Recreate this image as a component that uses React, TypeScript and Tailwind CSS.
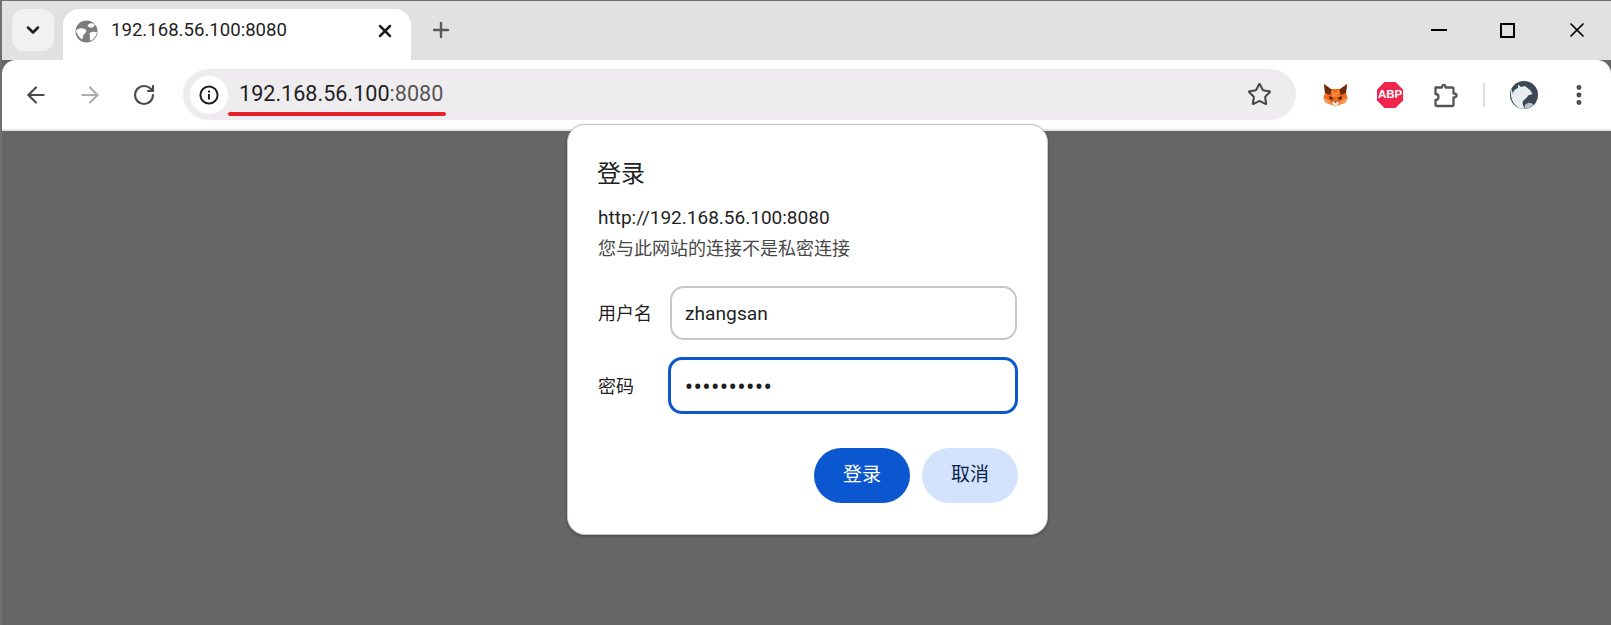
import React from 'react';
import { ArrowLeft, ArrowRight, ChevronDown, EllipsisVertical, Plus, RotateCw, Star, X } from 'lucide-react';

const latin = "font-['Roboto','Noto_Sans_CJK_SC',sans-serif]";

const Globe = () => (
  <svg width="23" height="23" viewBox="0 0 24 24">
    <circle cx="12" cy="12" r="11.5" fill="#7c7c7c" />
    <path d="M1 11 C4 8 8 8 11 10 C13 12 11 14 9 15 C8 17 9 19 7 20 C4 18 2 15 1 11 Z" fill="#fff" />
    <path d="M13 6 C15 3 18 3 20 4.5 C21.5 6 19 8 17 8 C15 8 14 7 13 6 Z" fill="#fff" />
    <path d="M15 14 C18 12 21 12 23 13 C22 17 20 20 16 22 C15 19 16 16 15 14 Z" fill="#fff" />
  </svg>
);

const InfoIcon = () => (
  <svg width="20" height="20" viewBox="0 0 20 20" fill="none">
    <circle cx="10" cy="10" r="8.6" stroke="#1f1f1f" strokeWidth="2" />
    <rect x="9" y="9" width="2" height="5.5" fill="#1f1f1f" />
    <rect x="9" y="5.6" width="2" height="2" fill="#1f1f1f" />
  </svg>
);

const Fox = () => (
  <svg width="25" height="24" viewBox="0 0 25 24">
    <path d="M1 1 L8 6 L17 6 L24 1 L23 10 L24.5 15 L22 20 L16 22 L12.5 23.5 L9 22 L3 20 L0.5 15 L2 10 Z" fill="#f26a1f" />
    <path d="M1 1 L9 7 L7 12 L2 10 Z M24 1 L16 7 L18 12 L23 10 Z" fill="#6b2c0e" />
    <path d="M8 7 L12.5 10 L17 7 L15 14 L10 14 Z" fill="#f58a3a" />
    <path d="M6.5 13 L10.5 15 L9 17 L6 16 Z M18.5 13 L14.5 15 L16 17 L19 16 Z" fill="#5b2a10" />
    <path d="M9 19.5 L12.5 18 L16 19.5 L15 22 L12.5 23.5 L10 22 Z" fill="#f5e6d8" />
    <path d="M11 18.6 L14 18.6 L12.5 20 Z" fill="#33231a" />
    <path d="M0.5 15 L3 20 L9 21 L6 17 Z M24.5 15 L22 20 L16 21 L19 17 Z" fill="#fa9a52" />
  </svg>
);

const Abp = () => (
  <div className="relative flex h-[26px] w-[26px] items-center justify-center">
    <svg className="absolute inset-0" width="26" height="26" viewBox="0 0 26 26">
      <polygon points="7.5,0 18.5,0 26,7.5 26,18.5 18.5,26 7.5,26 0,18.5 0,7.5" fill="#f0254e" />
    </svg>
    <span className="relative font-['Liberation_Sans',sans-serif] text-[11.5px] font-bold leading-none tracking-[-0.1px] text-white">ABP</span>
  </div>
);

const Puzzle = () => (
  <svg width="26" height="26" viewBox="0 0 26 26" fill="none">
    <path
      d="M3.5 5.5 H10 C10 2 13.5 2 13.5 5.5 H20 A1.5 1.5 0 0 1 21.5 7 V11.5 C25.5 11.5 25.5 15.5 21.5 15.5 V22.5 A1.5 1.5 0 0 1 20 24 H5 A1.5 1.5 0 0 1 3.5 22.5 V18 C7.5 18 7.5 12 3.5 12 Z"
      stroke="#555" strokeWidth="2.3" strokeLinejoin="round"
    />
  </svg>
);

const Avatar = () => (
  <svg width="28" height="28" viewBox="0 0 28 28">
    <circle cx="14" cy="14" r="14" fill="#3d4855" />
    <path d="M1.5 8 C0 14 1 22 9 27 C11 27.8 13 28 15 27.8 C13 25 12 22 13 20 C15 18 17 17 18 14.5 L22.5 13 L20 9 L15 5 L11 6 L8 3.5 L8 7 C5 8 3 10 3 13 Z" fill="#e8edf2" />
    <path d="M15 27.8 C14 25 15 23 18 22 C20 21.5 22 22 23.5 24 C21 26.5 18 27.6 15 27.8 Z" fill="#b6c4d1" />
  </svg>
);

function Field({ label, value, focused }: { label: string; value: string; focused?: boolean }) {
  return (
    <div className="flex items-center">
      <span className="w-[72px] pt-[2px] text-[18px] leading-[24px] text-[#1f1f1f]">{label}</span>
      <div
        className={
          focused
            ? 'ml-[-2px] flex h-[57px] w-[351px] items-center rounded-[14px] border-[3px] border-[#0b57d0] pl-[14px] pt-[3px] text-[25px] leading-none tracking-[0.3px] text-[#1f1f1f]'
            : 'flex h-[54px] w-[347px] items-center rounded-[14px] border-2 border-[#c7c7c7] pl-[13px] pt-[2px] text-[19.2px] text-[#1f1f1f]'
        }
      >
        {value}
      </div>
    </div>
  );
}

export default function App() {
  return (
    <div className={`relative flex h-[625px] w-[1611px] flex-col overflow-hidden border-t border-l-2 border-[#6f6f6f] bg-[#666666] ${latin}`}>
      {/* Tab strip */}
      <div className="flex h-[59px] shrink-0 items-start bg-[#e1e1e1]">
        <button className="ml-[10px] mt-[8px] flex h-[42px] w-[42px] items-center justify-center rounded-[12px] bg-[#f1f1f1]">
          <ChevronDown size={20} strokeWidth={3} color="#1f1f1f" />
        </button>
        <div className="ml-[9px] mt-[8px] flex h-[51px] w-[348px] items-center rounded-t-[16px] bg-white pb-[7px] pl-[12px]">
          <Globe />
          <span className="ml-[13px] text-[18.6px] text-[#1f1f1f]">192.168.56.100:8080</span>
          <X className="ml-auto mr-[16px]" size={20} strokeWidth={3} color="#1f1f1f" />
        </div>
        <Plus className="ml-[18px] mt-[17px]" size={24} strokeWidth={2.4} color="#5a5a5a" />
        <div className="ml-auto mr-[22px] mt-[17px] flex items-center">
          <div className="h-[2.5px] w-[16px] bg-black" />
          <div className="ml-[53px] h-[15px] w-[15px] border-2 border-black" />
          <X className="ml-[50px]" size={24} strokeWidth={1.7} color="#000" />
        </div>
      </div>

      {/* Toolbar */}
      <div className="flex h-[71px] shrink-0 items-center rounded-t-[14px] border-b-2 border-[#e4e4e4] bg-white">
        <ArrowLeft className="ml-[21px]" size={26} strokeWidth={2} color="#4a4a4a" />
        <ArrowRight className="ml-[28px]" size={26} strokeWidth={2} color="#adadad" />
        <RotateCw className="ml-[29px]" size={24} strokeWidth={2.2} color="#4a4a4a" />
        <div className="relative ml-[27px] flex h-[51px] w-[1113px] items-center rounded-full bg-[#eeecee] pl-[7px]">
          <div className="flex h-[38px] w-[38px] items-center justify-center rounded-full bg-white">
            <InfoIcon />
          </div>
          <span className="ml-[11px] text-[21.6px] text-[#1f1f1f]">
            192.168.56.100<span className="text-[#555555]">:8080</span>
          </span>
          <div className="absolute left-[45px] top-[43px] h-[4px] w-[218px] rounded-full bg-[#e8202a]" />
          <Star className="ml-auto mr-[24px]" size={25} strokeWidth={2} color="#474747" />
        </div>
        <div className="ml-[27px]"><Fox /></div>
        <div className="ml-[29px]"><Abp /></div>
        <div className="ml-[29px]"><Puzzle /></div>
        <div className="ml-[25px] h-[24px] w-[2px] bg-[#dedede]" />
        <div className="ml-[25px]"><Avatar /></div>
        <EllipsisVertical className="ml-[28px]" size={26} strokeWidth={2.6} color="#4a4a4a" />
      </div>

      {/* Basic auth dialog */}
      <div className="absolute left-[565px] top-[123px] flex h-[411px] w-[481px] flex-col rounded-[18px] border border-[#c8c8c8] bg-white pl-[29px] pr-[29px] pt-[32px] shadow-[0_1px_3px_rgba(0,0,0,0.35)]">
        <h1 className="text-[24px] font-normal leading-[34px] text-[#1f1f1f]">登录</h1>
        <p className="ml-[1px] mt-[15px] text-[19px] leading-[24px] text-[#1f1f1f]">http://192.168.56.100:8080</p>
        <p className="ml-[1px] mt-[7px] text-[18px] leading-[24px] text-[#474747]">您与此网站的连接不是私密连接</p>
        <div className="ml-[1px] mt-[25px]">
          <Field label="用户名" value="zhangsan" />
        </div>
        <div className="ml-[1px] mt-[17px]">
          <Field label="密码" value="••••••••••" focused />
        </div>
        <div className="mt-[34px] flex justify-end gap-[12px]">
          <button className="h-[55px] w-[96px] rounded-full bg-[#0b57d0] text-[19px] text-white">登录</button>
          <button className="h-[55px] w-[96px] rounded-full bg-[#d3e3fd] text-[19px] text-[#0a1f4a]">取消</button>
        </div>
      </div>
    </div>
  );
}
